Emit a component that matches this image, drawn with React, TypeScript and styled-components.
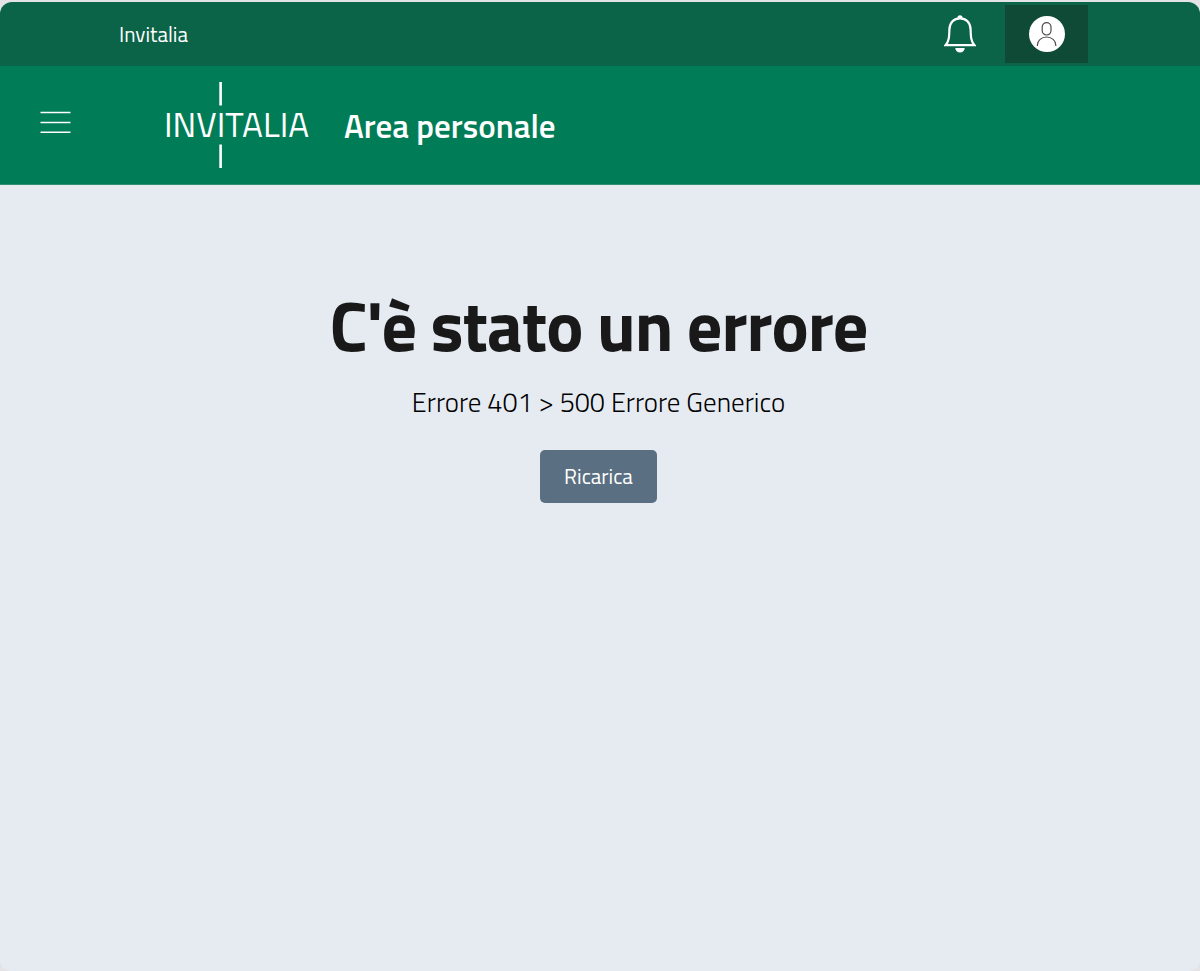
import React from "react";
import styled, { createGlobalStyle } from "styled-components";

const GlobalStyle = createGlobalStyle`
  *, *::before, *::after { box-sizing: border-box; }
  body {
    margin: 0;
    background: #e4e4e6;
    color: #19191a;
    font-family: "Titillium Web", Roboto, "Liberation Sans", sans-serif;
  }
`;

const Page = styled.div`
  display: flex;
  flex-direction: column;
  min-height: calc(100vh - 2px);
  margin-top: 2px;
  border-radius: 12px;
  overflow: hidden;
  background: #e6ebf2;
`;

const TopBar = styled.div`
  display: flex;
  align-items: center;
  justify-content: space-between;
  height: 64px;
  padding: 0 112px 0 119px;
  background: #0b6348;
`;

const OwnerLink = styled.a`
  color: #fff;
  font-size: 21px;
  line-height: 32px;
  text-decoration: none;
`;

const Actions = styled.div`
  display: flex;
  align-items: center;
  gap: 29px;
`;

const IconButton = styled.button`
  display: flex;
  align-items: center;
  justify-content: center;
  padding: 0;
  border: 0;
  background: transparent;
  color: #fff;
  cursor: pointer;
`;

const UserButton = styled(IconButton)`
  width: 83px;
  height: 58px;
  background: #0f4a37;
`;

const Avatar = styled.span`
  display: flex;
  width: 36px;
  height: 36px;
  border-radius: 50%;
  background: #fff;
`;

const Header = styled.header`
  display: flex;
  align-items: center;
  height: 119px;
  padding: 0 40px;
  border-bottom: 1px solid #2f9171;
  background: #007d57;
`;

const MenuButton = styled(IconButton)`
  margin-right: 94px;
  padding-bottom: 6px;
`;

const Brand = styled.a`
  display: flex;
  align-items: center;
  gap: 35px;
  color: #fff;
  text-decoration: none;
`;

const BrandName = styled.span`
  padding-top: 2px;
  font-size: 33px;
  font-weight: 600;
  line-height: 40px;
`;

const Main = styled.main`
  display: flex;
  flex: 1;
  flex-direction: column;
  align-items: center;
  padding: 98px 3px 40px 0;
  text-align: center;
`;

const Title = styled.h1`
  margin: 0;
  font-size: 70px;
  font-weight: 700;
  letter-spacing: -1px;
  line-height: 84px;
`;

const Message = styled.p`
  margin: 17px 0 30px;
  color: #000;
  font-size: 27px;
  font-weight: 300;
  line-height: 36px;
`;

const ReloadButton = styled.button`
  padding: 12px 24px;
  border: 0;
  border-radius: 5px;
  background: #5b6f82;
  color: #fff;
  font-family: inherit;
  font-size: 21px;
  line-height: 29px;
  cursor: pointer;
`;

const BellIcon = () => (
  <svg width="32" height="38" viewBox="0 0 32 38" fill="none" aria-hidden="true">
    <path d="M1.5 30.2C5 26.5 5.2 22 5.4 14.5C5.6 7.5 10 3.4 16 3.4S26.4 7.5 26.6 14.5C26.8 22 27 26.5 30.5 30.2Z" stroke="currentColor" strokeWidth="2.2" />
    <path d="M13.4 3a2.6 2.8 0 0 1 5.2 0ZM11.3 33h9.4a4.7 4.6 0 0 1-9.4 0Z" fill="currentColor" />
  </svg>
);

const UserIcon = () => (
  <svg width="36" height="36" viewBox="0 0 36 36" fill="none" stroke="#4d4d4d" strokeWidth="1.2" aria-hidden="true">
    <rect x="13.2" y="6.6" width="8.8" height="12.4" rx="4.4" />
    <path d="M8.4 30v-.8a9.2 8.2 0 0 1 18.4 0v.8" />
  </svg>
);

const MenuIcon = () => (
  <svg width="31" height="23" viewBox="0 0 31 23" stroke="currentColor" strokeWidth="1.5" aria-hidden="true">
    <path d="M.5 1.5h30M.5 11.5h30M.5 21.2h30" />
  </svg>
);

const Logo = () => (
  <svg width="144" height="86" viewBox="0 0 144 86" fill="#fff" role="img" aria-label="Invitalia">
    <path d="M54.3 0h2.6v23.5h-2.6ZM54.3 62.5h2.6V86h-2.6Z" />
    <text x="-1" y="55" fontFamily="'Titillium Web', Roboto, sans-serif" fontSize="35" fontWeight="400">
      INVITALIA
    </text>
  </svg>
);

export default function App() {
  return (
    <>
      <GlobalStyle />
      <Page>
        <TopBar>
          <OwnerLink href="#">Invitalia</OwnerLink>
          <Actions>
            <IconButton type="button" aria-label="Notifiche">
              <BellIcon />
            </IconButton>
            <UserButton type="button" aria-label="Profilo utente">
              <Avatar>
                <UserIcon />
              </Avatar>
            </UserButton>
          </Actions>
        </TopBar>
        <Header>
          <MenuButton type="button" aria-label="Apri il menu">
            <MenuIcon />
          </MenuButton>
          <Brand href="#">
            <Logo />
            <BrandName>Area personale</BrandName>
          </Brand>
        </Header>
        <Main>
          <Title>C'è stato un errore</Title>
          <Message>Errore 401 &gt; 500 Errore Generico</Message>
          <ReloadButton type="button">Ricarica</ReloadButton>
        </Main>
      </Page>
    </>
  );
}
